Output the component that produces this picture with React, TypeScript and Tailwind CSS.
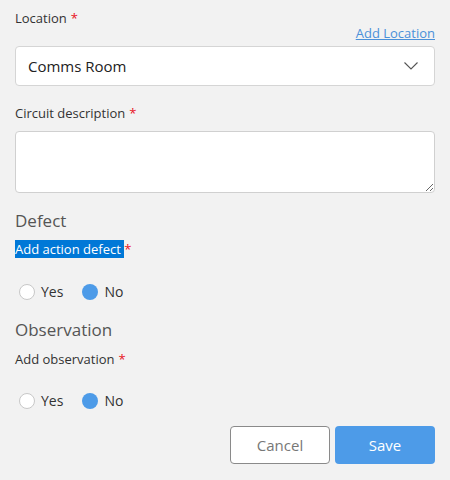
function Req() {
    return <span className="text-[#e81123] ml-1">*</span>;
}

function RadioPair() {
    return (
        <div className="flex items-center gap-[19px] pl-[4px]">
            <label className="flex items-center gap-[6px]">
                <span className="w-[16px] h-[16px] rounded-full bg-white border border-[#c8c8c8]" />
                <span className="text-[14px] text-[#333]">Yes</span>
            </label>
            <label className="flex items-center gap-[6px]">
                <span className="w-[16px] h-[16px] rounded-full bg-[#4d9be8]" />
                <span className="text-[14px] text-[#333]">No</span>
            </label>
        </div>
    );
}

export default function App() {
    return (
        <div className="w-[450px] h-[480px] bg-[#f2f2f2] px-[15px] pt-[9px] text-[#333]" style={{ fontFamily: '"Open Sans", sans-serif' }}>
            {/* Location */}
            <div className="text-[13px] leading-[18px]">Location<Req /></div>
            <div className="flex justify-end -mt-[3px]">
                <a href="#" className="text-[13px] leading-[18px] text-[#4a90d9] underline">Add Location</a>
            </div>
            <div className="mt-[4px] h-[40px] bg-white border border-[#d5d5d5] rounded-[4px] flex items-center justify-between pl-[12px] pr-[16px]">
                <span className="text-[15px] text-[#222]">Comms Room</span>
                <svg width="14" height="8" viewBox="0 0 14 8" fill="none">
                    <path d="M0.5 0.5 L7 7 L13.5 0.5" stroke="#555" strokeWidth="1.1" />
                </svg>
            </div>

            {/* Circuit description */}
            <div className="mt-[18px] text-[13px] leading-[18px]">Circuit description<Req /></div>
            <textarea className="mt-[9px] block w-full h-[62px] bg-white border border-[#d0d0d0] rounded-[4px] resize-y outline-none" />

            {/* Defect */}
            <div className="mt-[17px] text-[17px] leading-[22px] text-[#555]">Defect</div>
            <div className="mt-[8px] text-[13px] leading-[18px]">
                <span className="bg-[#0078d7] text-white">Add action defect </span>
                <span className="text-[#e81123]">*</span>
            </div>
            <div className="mt-[23px]">
                <RadioPair />
            </div>

            {/* Observation */}
            <div className="mt-[17px] text-[17px] leading-[22px] text-[#555]">Observation</div>
            <div className="mt-[9px] text-[13px] leading-[18px]">Add observation<Req /></div>
            <div className="mt-[22px]">
                <RadioPair />
            </div>

            <div className="mt-[15px] flex justify-end gap-[5px]">
                <button className="w-[100px] h-[38px] bg-white border border-[#8a8a8a] rounded-[4px] text-[15px] text-[#777]">Cancel</button>
                <button className="w-[100px] h-[38px] bg-[#4d9be8] rounded-[4px] text-[15px] text-white">Save</button>
            </div>
        </div>
    );
}
